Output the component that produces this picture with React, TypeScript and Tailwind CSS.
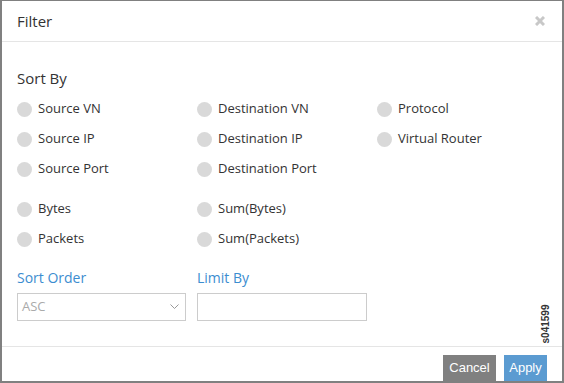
const rows1 = [
  ["Source VN", "Destination VN", "Protocol"],
  ["Source IP", "Destination IP", "Virtual Router"],
  ["Source Port", "Destination Port", ""],
];

const rows2 = [
  ["Bytes", "Sum(Bytes)", ""],
  ["Packets", "Sum(Packets)", ""],
];

function Radio({ label }: { label: string }) {
  if (!label) return <div />;
  return (
    <label className="flex items-center gap-[6px] h-[30px]">
      <span className="w-[15px] h-[15px] rounded-full bg-[#d9d9d9] shrink-0" />
      <span className="text-[13px] text-[#333]">{label}</span>
    </label>
  );
}

function RadioRows({ rows }: { rows: string[][] }) {
  return (
    <div className="grid grid-cols-[180px_180px_180px]">
      {rows.flat().map((l, i) => (
        <Radio key={i} label={l} />
      ))}
    </div>
  );
}

export default function App() {
  return (
    <div
      className="relative w-[564px] h-[383px] bg-white border-[#808080] border-l-2 border-r-2 border-t border-b-2 flex flex-col"
      style={{ fontFamily: '"Open Sans", sans-serif' }}
    >
      <div className="h-[41px] shrink-0 flex items-center justify-between pl-[15px] pr-[17px] border-b border-[#e5e5e5]">
        <span className="text-[15px] text-[#333]">Filter</span>
        <svg width="10" height="10" viewBox="0 0 10 10" className="text-[#c8c8c8]">
          <path d="M1 1L9 9M9 1L1 9" stroke="currentColor" strokeWidth="3" />
        </svg>
      </div>

      <div className="flex-1 pl-[15px] pt-[21px]">
        <div className="h-[30px] flex items-center text-[15px] text-[#333]">Sort By</div>
        <div className="h-[1px]" />
        <RadioRows rows={rows1} />
        <div className="h-[10px]" />
        <RadioRows rows={rows2} />
        <div className="grid grid-cols-[180px_180px] mt-[8px]">
          <div>
            <div className="h-[31px] flex items-center text-[14px] text-[#3c8dd0]">Sort Order</div>
            <div className="w-[169px] h-[28px] border border-[#ccc] flex items-center justify-between pl-[4px] pr-[6px]">
              <span className="text-[13px] text-[#aaa]">ASC</span>
              <svg width="9" height="6" viewBox="0 0 9 6">
                <path d="M0.5 0.5L4.5 4.5L8.5 0.5" fill="none" stroke="#999" strokeWidth="1" />
              </svg>
            </div>
          </div>
          <div>
            <div className="h-[31px] flex items-center text-[14px] text-[#3c8dd0]">Limit By</div>
            <div className="w-[170px] h-[28px] border border-[#ccc]" />
          </div>
        </div>
      </div>

      <div className="h-[35px] shrink-0 border-t border-[#e5e5e5] flex items-end justify-end gap-[8px] pr-[15px]">
        <button className="w-[53px] h-[26px] bg-[#808080] text-white text-[13px]" style={{ fontFamily: '"Liberation Sans", Arial, sans-serif' }}>
          Cancel
        </button>
        <button className="w-[43px] h-[26px] bg-[#5b9bd1] text-white text-[13px]" style={{ fontFamily: '"Liberation Sans", Arial, sans-serif' }}>
          Apply
        </button>
      </div>

      <span
        className="absolute left-[522px] top-[318px] w-[44px] text-center -rotate-90 text-[10px] font-bold text-[#333] leading-none"
        style={{ fontFamily: '"Liberation Sans", Arial, sans-serif' }}
      >
        s041599
      </span>
    </div>
  );
}
